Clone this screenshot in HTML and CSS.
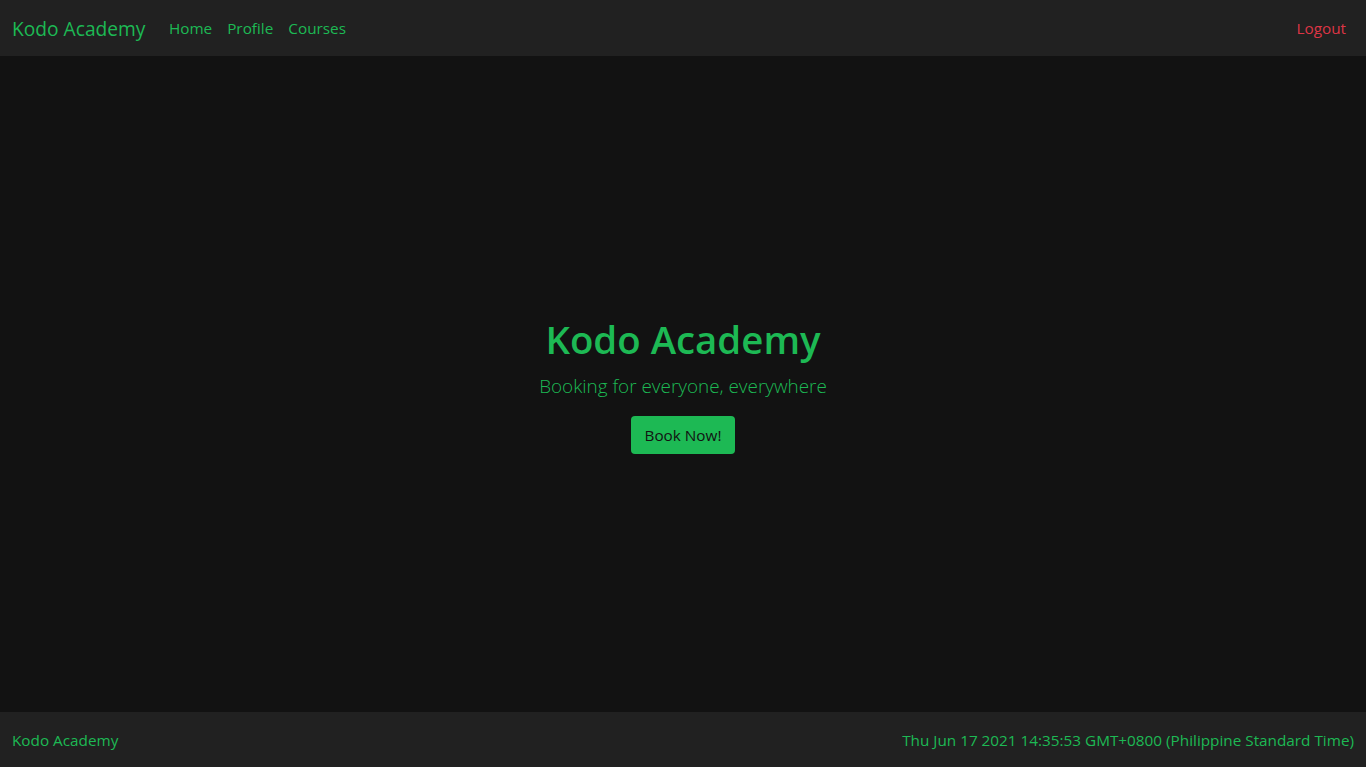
FILE: index.html
```html
<!DOCTYPE html>
<html lang="en">
<head>
<meta charset="utf-8">
<title>Kodo Academy</title>
<link rel="stylesheet" href="styles.css">
</head>
<body>
<nav class="navbar">
  <a class="brand" href="#">Kodo Academy</a>
  <ul class="nav-links">
    <li><a href="#">Home</a></li>
    <li><a href="#">Profile</a></li>
    <li><a href="#">Courses</a></li>
  </ul>
  <a class="logout" href="#">Logout</a>
</nav>
<main class="hero">
  <h1 class="hero-title">Kodo Academy</h1>
  <p class="hero-lead">Booking for everyone, everywhere</p>
  <a class="btn" href="#">Book Now!</a>
</main>
<footer class="footer">
  <span>Kodo Academy</span>
  <span>Thu Jun 17 2021 14:35:53 GMT+0800 (Philippine Standard Time)</span>
</footer>
</body>
</html>
```
FILE: styles.css
```css
* { box-sizing: border-box; }
html, body { margin: 0; padding: 0; }
body {
  font-family: "Open Sans", "Noto Sans", sans-serif;
  background: #121212;
  color: #1db954;
  min-height: 100vh;
  display: flex;
  flex-direction: column;
  font-size: 15.3px;
}
a { text-decoration: none; }
.navbar {
  height: 56px;
  background: #212121;
  display: flex;
  align-items: center;
  padding: 0 12px;
}
.brand {
  color: #1db954;
  font-size: 19.2px;
  margin-right: 16px;
}
.nav-links {
  display: flex;
  list-style: none;
  margin: 0;
  padding: 0;
  flex: 1;
}
.nav-links a {
  color: #1db954;
  padding: 8px 7.5px;
  display: block;
}
.logout {
  color: #dc3545;
  padding: 8px;
}
.hero {
  flex: 1;
  display: flex;
  flex-direction: column;
  align-items: center;
  justify-content: center;
  text-align: center;
  padding-top: 1px;
}
.hero-title {
  font-size: 38.4px;
  font-weight: 600;
  line-height: 48px;
  margin: 0 0 8px;
}
.hero-lead {
  font-size: 18.9px;
  font-weight: 300;
  line-height: 30px;
  margin: 0 0 15px;
}
.btn {
  background: #1db954;
  color: #121212;
  padding: 7px 14px;
  line-height: 24px;
  border-radius: 4px;
}
.footer {
  height: 55px;
  background: #212121;
  display: flex;
  justify-content: space-between;
  align-items: center;
  padding: 0 12px;
}
```
